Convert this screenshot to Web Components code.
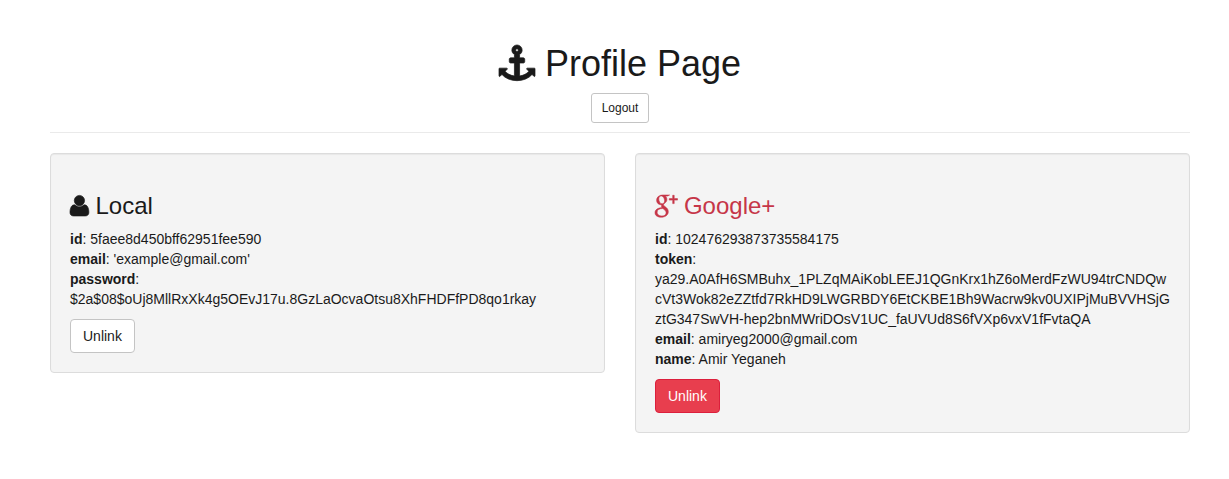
<!DOCTYPE html>
<html lang="en">
<head>
<meta charset="utf-8">
<title>Profile Page</title>
<style>
body{margin:0;background:#fff;color:#1a1a1a;font:14px/20px "Liberation Sans",Arial,sans-serif}
</style>
</head>
<body>
<profile-page></profile-page>
<script>
const icons = {
  anchor: [1792, '<g transform="translate(0 1536) scale(1 -1)" stroke="currentColor" stroke-width="36"><path d="M960 1280q0 26 -19 45t-45 19t-45 -19t-19 -45t19 -45t45 -19t45 19t19 45zM1792 352v-352q0 -22 -20 -30q-8 -2 -12 -2q-13 0 -23 9l-93 93q-119 -143 -318.5 -226.5t-429.5 -83.5t-429.5 83.5t-318.5 226.5l-93 -93q-9 -9 -23 -9q-4 0 -12 2q-20 8 -20 30v352q0 14 9 23t23 9h352q22 0 30 -20q8 -19 -7 -35l-100 -100q67 -91 189.5 -153.5t271.5 -82.5v647h-192q-26 0 -45 19t-19 45v128q0 26 19 45t45 19h192v163q-58 34 -93 92.5t-35 128.5q0 106 75 181t181 75t181 -75t75 -181q0 -70 -35 -128.5t-93 -92.5v-163h192q26 0 45 -19t19 -45v-128q0 -26 -19 -45t-45 -19h-192v-647q149 20 271.5 82.5t189.5 153.5l-100 100q-15 16 -7 35q8 20 30 20h352q14 0 23 -9t9 -23z"/></g>'],
  user: [1408, '<g transform="translate(0 1586) scale(1 -1)" stroke="currentColor" stroke-width="50"><path d="M1408 131q0 -120 -73 -189.5t-194 -69.5h-874q-121 0 -194 69.5t-73 189.5q0 53 3.5 103.5t14 109t26.5 108.5t43 97.5t62 81t85.5 53.5t111.5 20q9 0 42 -21.5t74.5 -48t108 -48t133.5 -21.5t133.5 21.5t108 48t74.5 48t42 21.5q61 0 111.5 -20t85.5 -53.5t62 -81t43 -97.5t26.5 -108.5t14 -109t3.5 -103.5zM1088 1024q0 -159 -112.5 -271.5t-271.5 -112.5t-271.5 112.5t-112.5 271.5t112.5 271.5t271.5 112.5t271.5 -112.5t112.5 -271.5z"/></g>'],
  plus: [1664, '<g transform="translate(0 150) scale(74.667)" stroke="currentColor" stroke-width=".55"><path fill-rule="evenodd" d="M14.6 0H7.6C3.9 0 1.6 2.4 1.6 5.2C1.6 8 3.7 9.9 6.8 9.9C6.3 10.9 6.4 11.7 7.1 12.6C2.9 12.8 0 14.7 0 17.7C0 20.5 2.5 22.2 6.2 22.2C10.6 22.2 13.3 19.8 13.3 16.7C13.3 14.5 12.2 13.2 10.6 12C9 10.8 8.5 10.4 8.5 9.7C8.5 9 9.2 8.6 10 7.9C11.2 6.9 11.9 5.9 11.9 4.4C11.9 2.9 11.2 1.7 10.3 1H12.6ZM6.2 .9C8.1 .9 9.6 3.3 9.6 5.8C9.6 7.7 8.7 8.8 7.2 8.8C5.2 8.8 3.8 6.3 3.8 3.9C3.8 2 4.8 .9 6.2 .9ZM7.8 13.5C9.8 14.9 11.1 16 11.1 17.8C11.1 19.8 9.6 21 6.9 21C4 21 2.1 19.5 2.1 17.2C2.1 14.8 4.4 13.5 7.8 13.5Z"/><path d="M17.7 .3H19.2V3.6H22.5V5.1H19.2V8.6H17.7V5.1H14.3V3.6H17.7Z"/></g>']
};
const define = (name, html, setup) => customElements.define(name, class extends HTMLElement {
  connectedCallback() {
    if (this.shadowRoot) return;
    const template = document.createElement('template');
    template.innerHTML = html;
    this.attachShadow({mode: 'open'}).append(template.content.cloneNode(true));
    if (setup) setup(this);
  }
});

define('app-icon', `<style>
:host{display:inline-block}
svg{display:inline-block;height:1em;vertical-align:-.143em;fill:currentColor;overflow:visible}
</style><svg aria-hidden="true"></svg>`, el => {
  const [width, shape] = icons[el.getAttribute('name')];
  const svg = el.shadowRoot.querySelector('svg');
  svg.setAttribute('viewBox', `0 0 ${width} 1792`);
  svg.style.width = width / 1792 + 'em';
  svg.innerHTML = shape;
});

define('app-button', `<style>
:host{display:inline-block;vertical-align:top}
button{display:block;margin:0;padding:6px 12px;font:14px/20px "Liberation Sans",Arial,sans-serif;color:#1a1a1a;background:#fff;border:1px solid #c4c4c4;border-radius:4px}
:host([small]) button{padding:5px 10px;font-size:12px;line-height:18px;border-radius:3px}
:host([danger]) button{color:#fff;background:#e83e4e;border-color:#dc1f3c}
</style><button type="button"><slot></slot></button>`);

define('page-header', `<style>
:host{display:block;padding:4px 0 9px;margin:40px 0 20px;border-bottom:1px solid #eaeaea;text-align:center}
h1{font-size:36px;font-weight:500;line-height:40px;height:40px;margin:0 0 9px}
</style><h1><slot></slot></h1><slot name="action"></slot>`);

define('profile-card', `<style>
:host{display:block;box-sizing:border-box;padding:19px;background:#f4f4f4;border:1px solid #dcdcdc;border-radius:4px;box-shadow:inset 0 1px 1px rgba(0,0,0,.05)}
h3{font-size:24px;font-weight:500;line-height:26px;height:26px;margin:20px 0 10px}
:host([danger]) h3{color:#c63648}
.rows{margin-bottom:10px}
</style><h3><slot name="title"></slot></h3><div class="rows"><slot></slot></div><slot name="action"></slot>`);

define('profile-field', `<style>
:host{display:block;line-height:20px;overflow-wrap:break-word}
b{font-weight:700}
</style><b></b>: <slot></slot>`, el => {
  el.shadowRoot.querySelector('b').textContent = el.getAttribute('label');
});

define('profile-page', `<style>
:host{display:flow-root;width:1140px;margin-left:50px}
.cards{display:grid;grid-template-columns:555px 555px;gap:30px;align-items:start}
</style>
<page-header><app-icon name="anchor"></app-icon> Profile Page<app-button slot="action" small>Logout</app-button></page-header>
<div class="cards">
<profile-card>
<span slot="title"><app-icon name="user"></app-icon> Local</span>
<profile-field label="id">5faee8d450bff62951fee590</profile-field>
<profile-field label="email">'example@gmail.com'</profile-field>
<profile-field label="password"><br>$2a$08$oUj8MllRxXk4g5OEvJ17u.8GzLaOcvaOtsu8XhFHDFfPD8qo1rkay</profile-field>
<app-button slot="action">Unlink</app-button>
</profile-card>
<profile-card danger>
<span slot="title"><app-icon name="plus"></app-icon> Google+</span>
<profile-field label="id">102476293873735584175</profile-field>
<profile-field label="token"><br>ya29.A0AfH6SMBuhx_1PLZqMAiKobLEEJ1QGnKrx1hZ6oMerdFzWU94trCNDQw<br>cVt3Wok82eZZtfd7RkHD9LWGRBDY6EtCKBE1Bh9Wacrw9kv0UXIPjMuBVVHSjG<br>ztG347SwVH-hep2bnMWriDOsV1UC_faUVUd8S6fVXp6vxV1fFvtaQA</profile-field>
<profile-field label="email">amiryeg2000@gmail.com</profile-field>
<profile-field label="name">Amir Yeganeh</profile-field>
<app-button slot="action" danger>Unlink</app-button>
</profile-card>
</div>`);
</script>
</body>
</html>
